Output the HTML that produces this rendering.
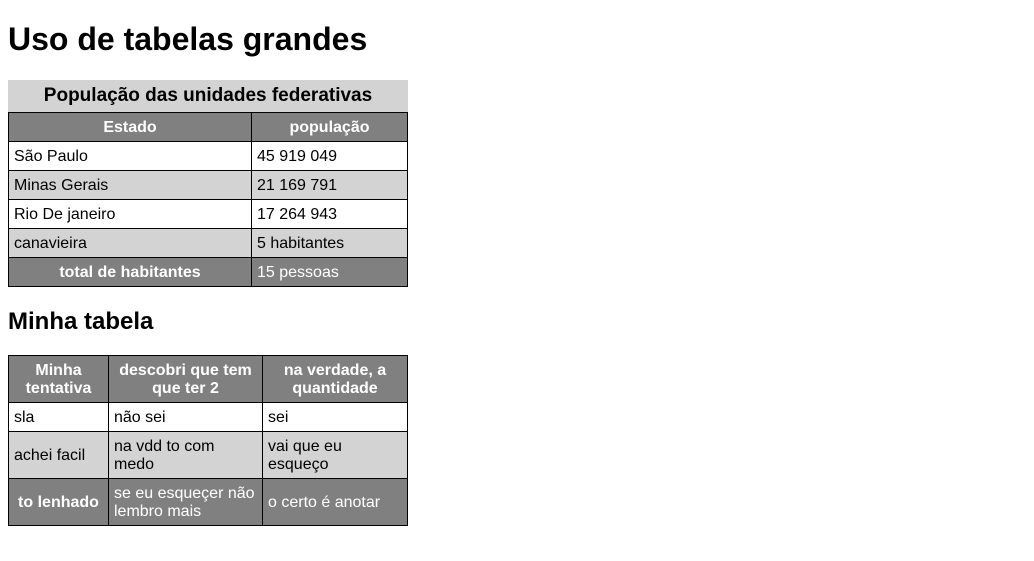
<!DOCTYPE html>
<html><head><meta charset="utf-8"><style>
body{margin:8px;font-family:"Liberation Sans",Arial,sans-serif;font-size:16px;background:#fff;color:#000}
h1{font-size:32px;margin:21px 0 0;line-height:37px;position:absolute;top:0;left:8px}
h2{font-size:24px;margin:0;position:absolute;top:308px;left:8px;line-height:28px}
table{border-collapse:collapse;position:absolute;left:8px;width:400px}
td,th{border:1px solid #000;padding:1px 5px 0;line-height:18px;text-align:left}
th{background:#808080;color:#fff;text-align:center}
caption{background:#d3d3d3;font-weight:bold;font-size:19px;height:32px;line-height:32px}
.g td{background:#d3d3d3}
.d td{background:#808080;color:#fff}
#t1{top:80px}#t1 tr{height:29px}
#t2{top:355px}
</style></head><body>
<h1>Uso de tabelas grandes</h1>
<table id="t1"><caption>População das unidades federativas</caption>
<tr><th style="width:232px">Estado</th><th>população</th></tr>
<tr><td>São Paulo</td><td>45 919 049</td></tr>
<tr class="g"><td>Minas Gerais</td><td>21 169 791</td></tr>
<tr><td>Rio De janeiro</td><td>17 264 943</td></tr>
<tr class="g"><td>canavieira</td><td>5 habitantes</td></tr>
<tr class="d"><th>total de habitantes</th><td>15 pessoas</td></tr>
</table>
<h2>Minha tabela</h2>
<table id="t2">
<tr style="height:47px"><th style="width:89px">Minha tentativa</th><th style="width:143px">descobri que tem que ter 2</th><th>na verdade, a quantidade</th></tr>
<tr style="height:29px"><td>sla</td><td>não sei</td><td>sei</td></tr>
<tr class="g" style="height:47px"><td>achei facil</td><td>na vdd to com medo</td><td>vai que eu esqueço</td></tr>
<tr class="d" style="height:47px"><th>to lenhado</th><td>se eu esqueçer não lembro mais</td><td>o certo é anotar</td></tr>
</table>
</body></html>
